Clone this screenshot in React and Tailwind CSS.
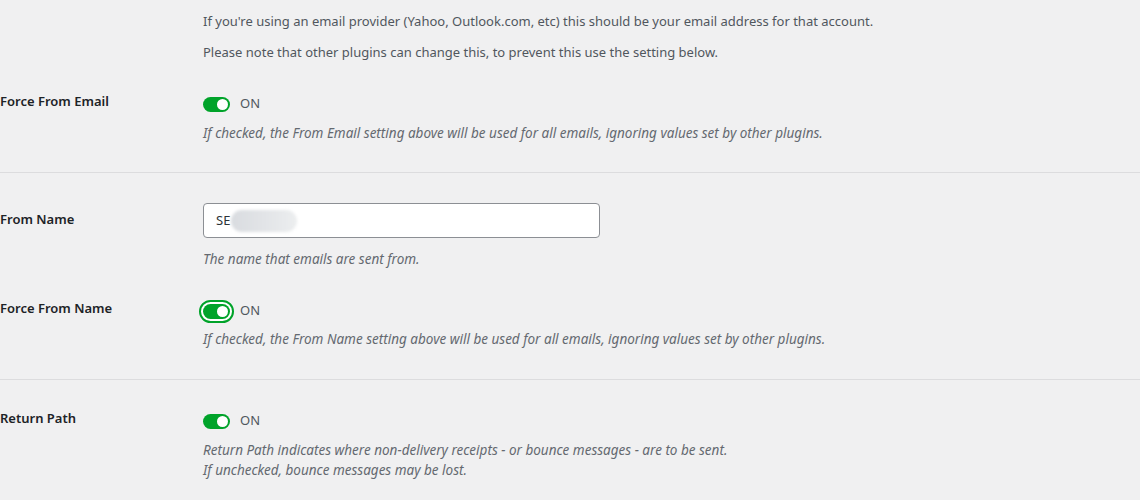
import React from "react";

function Toggle({ focused }) {
  return (
    <div className="flex items-center gap-[10px] h-[20px]">
      <div
        className={
          focused
            ? "rounded-full p-[2px] border-2 border-[#00a32a] bg-white -m-[4px]"
            : ""
        }
      >
        <div className="w-[27px] h-[15px] rounded-full bg-[#00a32a] flex items-center justify-end pr-[2px]">
          <div className="w-[11px] h-[11px] rounded-full bg-white" />
        </div>
      </div>
      <span className="text-[13px] text-[#50575e]">ON</span>
    </div>
  );
}

function Row({ label, children, labelTop }) {
  return (
    <div className="flex">
      <div className="w-[203px] shrink-0 text-[13px] leading-[20px] font-semibold text-[#1d2327]" style={{ paddingTop: labelTop }}>
        {label}
      </div>
      <div className="flex-1">{children}</div>
    </div>
  );
}

export default function App() {
  return (
    <div
      className="w-[1140px] h-[500px] bg-[#f0f0f1] overflow-hidden text-[#3c434a]"
      style={{ fontFamily: '"Noto Sans", "Open Sans", sans-serif' }}
    >
      <div className="pl-[203px] pt-[11px] text-[13px] leading-[20px] text-[#50575e]">
        <p>If you're using an email provider (Yahoo, Outlook.com, etc) this should be your email address for that account.</p>
        <p className="mt-[11px]">Please note that other plugins can change this, to prevent this use the setting below.</p>
      </div>

      <div className="mt-[29px]">
        <Row label="Force From Email" labelTop="0px">
          <div className="pt-[3px]">
            <Toggle />
          </div>
          <p className="mt-[9px] text-[13.5px] leading-[20px] italic text-[#646970]">
            If checked, the From Email setting above will be used for all emails, ignoring values set by other plugins.
          </p>
        </Row>
      </div>

      <div className="mt-[29px] border-t border-[#dcdcde]" />

      <div className="mt-[30px]">
        <Row label="From Name" labelTop="6px">
          <div className="w-[397px] h-[35px] rounded-[4px] border border-[#8c8f94] bg-white flex items-center pl-[12px] text-[13px] text-[#2c3338]">
            <span>SE</span>
            <span className="ml-[1px] w-[66px] h-[22px] rounded-full bg-gradient-to-r from-[#d9dce0] via-[#e2e4e7] to-[#eceeef] blur-[1.5px]" />
          </div>
          <p className="mt-[11px] text-[13.5px] leading-[20px] italic text-[#646970]">The name that emails are sent from.</p>
        </Row>
      </div>

      <div className="mt-[29px]">
        <Row label="Force From Name" labelTop="0px">
          <div className="pt-[3px]">
            <Toggle focused />
          </div>
          <p className="mt-[8px] text-[13.5px] leading-[20px] italic text-[#646970]">
            If checked, the From Name setting above will be used for all emails, ignoring values set by other plugins.
          </p>
        </Row>
      </div>

      <div className="mt-[30px] border-t border-[#dcdcde]" />

      <div className="mt-[28px]">
        <Row label="Return Path" labelTop="0px">
          <div className="pt-[3px]">
            <Toggle />
          </div>
          <p className="mt-[9px] text-[13.5px] italic text-[#646970] leading-[20px]">
            Return Path indicates where non-delivery receipts - or bounce messages - are to be sent.
            <br />
            If unchecked, bounce messages may be lost.
          </p>
        </Row>
      </div>
    </div>
  );
}
